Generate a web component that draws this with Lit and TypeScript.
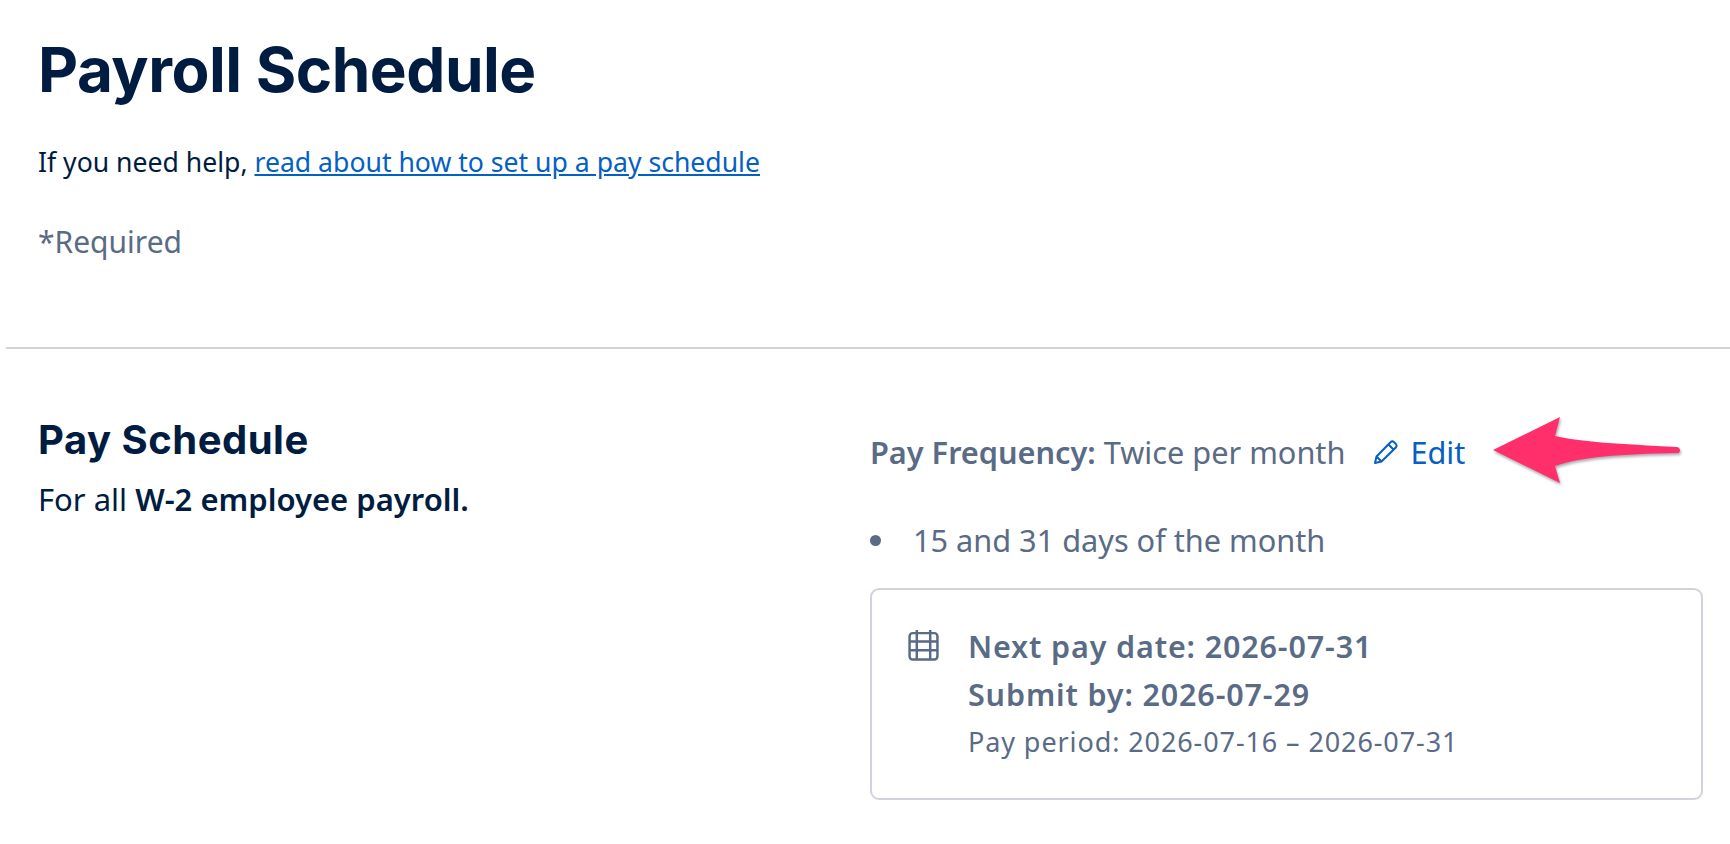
import { LitElement, html, css } from "lit";
import { customElement } from "lit/decorators.js";

@customElement("app-root")
export class AppRoot extends LitElement {
  static styles = css`
    :host { display: block; width: 1730px; height: 844px; overflow: hidden; position: relative; background: #fff;
      font-family: "Noto Sans", "Open Sans", sans-serif; color: #001c40; font-size: 26.6px; }
    * { box-sizing: border-box; }
    .head { padding: 30px 0 0 38px; height: 347px; }
    h1 { margin: 0; font-family: Inter, "Liberation Sans", sans-serif; font-weight: 700; font-size: 62px; line-height: 80px; letter-spacing: -0.5px; color: #001c40; }
    .help { margin: 34px 0 0; line-height: 36px; }
    a { color: #0560c4; }
    .req { margin: 44px 0 0; line-height: 36px; color: #5a6b85; font-size: 30px; }
    .divider { height: 2px; margin-left: 6px; background: #d0d3df; }
    .section { display: grid; grid-template-columns: 832px 833px; padding: 0 0 0 38px; }
    h2 { margin: 66px 0 0; font-family: Inter, "Liberation Sans", sans-serif; font-weight: 700; font-size: 40px; line-height: 50px; letter-spacing: 0.5px; }
    .sub { margin: 16px 0 0; line-height: 36px; font-size: 31px; }
    b { font-weight: 600; }
    .right { color: #5a6b85; padding-top: 85px; font-size: 30.7px; }
    .freq { display: flex; align-items: center; line-height: 36px; }
    .edit { display: flex; align-items: center; gap: 11px; margin-left: 28px; color: #0560c4; }
    .edit svg { width: 26px; height: 26px; }
    ul { margin: 52px 0 0; padding: 0; list-style: none; }
    li { display: flex; align-items: center; line-height: 36px; }
    .dot { width: 11px; height: 11px; border-radius: 50%; background: #5a6b85; margin-right: 32px; }
    .card { display: flex; margin-top: 30px; height: 212px; border: 2px solid #d0d3df; border-radius: 9px; padding: 32px 36px; }
    .card svg { width: 31px; height: 32px; flex: none; margin-right: 29px; margin-top: 7px; }
    .line { font-weight: 600; line-height: 48px; font-size: 30.5px; letter-spacing: 0.85px; }
    .small { font-size: 27px; line-height: 48px; letter-spacing: 0.9px; }
    .arrow { position: absolute; left: 1490px; top: 415px; width: 194px; height: 72px; overflow: visible; filter: drop-shadow(1px 2px 1.5px rgba(0,0,0,.35)); }
  `;
  render() {
    return html`
      <div class="head">
        <h1>Payroll Schedule</h1>
        <p class="help">If you need help, <a href="#">read about how to set up a pay schedule</a></p>
        <p class="req">*Required</p>
      </div>
      <div class="divider"></div>
      <div class="section">
        <div>
          <h2>Pay Schedule</h2>
          <p class="sub">For all <b>W-2 employee payroll.</b></p>
        </div>
        <div class="right">
          <div class="freq">
            <span><b>Pay Frequency:</b> Twice per month</span>
            <span class="edit">
              <svg viewBox="0 0 26 26" fill="none" stroke="currentColor" stroke-width="2" stroke-linejoin="round">
                <path d="M2 24l1.500-6.500L17.500 3.200c1-1 2.600-1 3.600 0l1.700 1.700c1 1 1 2.600 0 3.600L8.500 22.500z"/>
                <path d="M3.500 17.500l5 5M15.500 5.500l5 5"/>
              </svg>
              Edit
            </span>
          </div>
          <ul><li><span class="dot"></span>15 and 31 days of the month</li></ul>
          <div class="card">
            <svg viewBox="0 0 30 31" fill="none" stroke="currentColor" stroke-width="2.4">
              <rect x="1.500" y="4" width="27" height="25.500" rx="3"/>
              <path d="M1.500 12h27M1.500 20.500h27M8.500 1v28M21.500 1v28"/>
            </svg>
            <div>
              <div class="line">Next pay date: 2026-07-31</div>
              <div class="line">Submit by: 2026-07-29</div>
              <div class="small">Pay period: 2026-07-16 – 2026-07-31</div>
            </div>
          </div>
        </div>
      </div>
      <svg class="arrow" viewBox="0 0 194 72">
        <path fill="#ff2f6b" d="M3 35L70 2L65 21C90 27 130 29 187 32C191 33 191 38 187 38C130 39 90 42 65 51L70 68Z"/>
      </svg>
    `;
  }
}
